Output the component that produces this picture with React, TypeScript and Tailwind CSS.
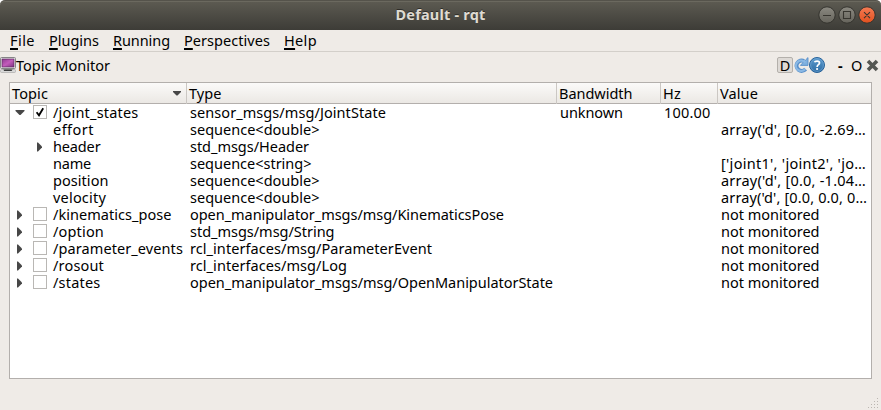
import { useLayoutEffect, useRef, type ReactNode } from "react";

/* Text run whose tracking is adjusted so that it occupies a given width. */
function Fit({ w, children, className = "" }: { w: number; children: ReactNode; className?: string }) {
  const ref = useRef<HTMLSpanElement>(null);
  useLayoutEffect(() => {
    const el = ref.current;
    if (!el) return;
    el.style.letterSpacing = "0px";
    const n = (el.textContent ?? "").length;
    el.style.letterSpacing = (w - el.getBoundingClientRect().width) / n + "px";
  }, [w]);
  return (
    <span ref={ref} className={`inline-block whitespace-pre ${className}`}>
      {children}
    </span>
  );
}

type Row = {
  topic: [string, number];
  type: [string, number];
  value?: [string, number];
  bandwidth?: [string, number];
  hz?: [string, number];
  child?: boolean;
  arrow?: "down" | "right";
  checked?: boolean;
};

const idle: [string, number] = ["not monitored", 98.5];

const rows: Row[] = [
  { topic: ["/joint_states", 85.5], type: ["sensor_msgs/msg/JointState", 196], bandwidth: ["unknown", 63], hz: ["100.00", 46.5], arrow: "down", checked: true },
  { topic: ["effort", 41], type: ["sequence<double>", 129.5], value: ["array('d', [0.0, -2.69…", 145], child: true },
  { topic: ["header", 47.5], type: ["std_msgs/Header", 119], child: true, arrow: "right" },
  { topic: ["name", 38], type: ["sequence<string>", 121.5], value: ["['joint1', 'joint2', 'jo…", 145], child: true },
  { topic: ["position", 55.5], type: ["sequence<double>", 129.5], value: ["array('d', [0.0, -1.04…", 145], child: true },
  { topic: ["velocity", 53], type: ["sequence<double>", 129.5], value: ["array('d', [0.0, 0.0, 0…", 146], child: true },
  { topic: ["/kinematics_pose", 118.5], type: ["open_manipulator_msgs/msg/KinematicsPose", 314], value: idle, arrow: "right" },
  { topic: ["/option", 51], type: ["std_msgs/msg/String", 144.5], value: idle, arrow: "right" },
  { topic: ["/parameter_events", 130], type: ["rcl_interfaces/msg/ParameterEvent", 242], value: idle, arrow: "right" },
  { topic: ["/rosout", 51], type: ["rcl_interfaces/msg/Log", 157], value: idle, arrow: "right" },
  { topic: ["/states", 47.5], type: ["open_manipulator_msgs/msg/OpenManipulatorState", 363], value: idle, arrow: "right" },
];

const grid = "grid grid-cols-[177px_370px_104px_57px_1fr]";

function Arrow({ dir }: { dir?: "down" | "right" }) {
  return (
    <svg width="10" height="17" viewBox="0 0 10 17" className="block shrink-0">
      {dir === "down" && <path d="M.5 5h9v1L5.5 10h-1L.5 6z" fill="#474747" />}
      {dir === "right" && <path d="M2 3.5h1L7 7.5v1L3 12.5H2z" fill="#474747" />}
    </svg>
  );
}

function Check({ checked }: { checked?: boolean }) {
  return (
    <svg width="14" height="14" viewBox="0 0 14 14" className="block shrink-0">
      <rect x=".5" y=".5" width="13" height="13" fill="#fff" stroke="#b9b7b4" />
      {checked && <path d="M3.6 7.2 6 10.3 10.2 3.2" fill="none" stroke="#000" strokeWidth="1.8" />}
    </svg>
  );
}

function TableRow({ r }: { r: Row }) {
  return (
    <div className={`${grid} h-[17px] leading-[15px]`}>
      <div className="flex">
        <div className={`flex w-[43px] shrink-0 ${r.child ? "pl-[25px]" : "pl-[5px]"}`}>
          <Arrow dir={r.arrow} />
          {!r.child && (
            <div className="ml-[8px]">
              <Check checked={r.checked} />
            </div>
          )}
        </div>
        <Fit w={r.topic[1]}>{r.topic[0]}</Fit>
      </div>
      <div className="pl-[3px]"><Fit w={r.type[1]}>{r.type[0]}</Fit></div>
      <div className="pl-[3px]">{r.bandwidth && <Fit w={r.bandwidth[1]}>{r.bandwidth[0]}</Fit>}</div>
      <div className="pl-[3px]">{r.hz && <Fit w={r.hz[1]}>{r.hz[0]}</Fit>}</div>
      <div className="pl-[3px]">{r.value && <Fit w={r.value[1]}>{r.value[0]}</Fit>}</div>
    </div>
  );
}

function MenuItem({ label, w }: { label: string; w: number }) {
  return (
    <Fit w={w}>
      <span className="underline decoration-2 underline-offset-2 [text-decoration-skip-ink:none]">{label[0]}</span>
      {label.slice(1)}
    </Fit>
  );
}

function WindowButtons() {
  return (
    <svg width="60" height="20" viewBox="0 0 60 20" className="block">
      <defs>
        <linearGradient id="grey" x1="0" y1="0" x2="0" y2="1">
          <stop offset="0" stopColor="#8b8981" />
          <stop offset="1" stopColor="#65635b" />
        </linearGradient>
        <linearGradient id="orange" x1="0" y1="0" x2="0" y2="1">
          <stop offset="0" stopColor="#f47b54" />
          <stop offset="1" stopColor="#e1501e" />
        </linearGradient>
      </defs>
      <g stroke="#34332e">
        <circle cx="10" cy="10" r="8.2" fill="url(#grey)" />
        <circle cx="30" cy="10" r="8.2" fill="url(#grey)" />
        <circle cx="50" cy="10" r="8.2" fill="url(#orange)" />
      </g>
      <path d="M6 10.5h8M26.5 6.5h7v7h-7zM47 7.2l6 6M53 7.2l-6 6" fill="none" stroke="#37352f" strokeWidth="1.1" />
    </svg>
  );
}

function MonitorIcon() {
  return (
    <svg width="16" height="16" viewBox="0 0 16 16" className="block shrink-0">
      <defs>
        <linearGradient id="screen" x1="0" y1="0" x2="1" y2="1">
          <stop offset="0" stopColor="#8e3b90" />
          <stop offset=".5" stopColor="#c35cbb" />
          <stop offset="1" stopColor="#7b3280" />
        </linearGradient>
      </defs>
      <rect x=".5" y=".5" width="15" height="11" rx="1" fill="#eee" stroke="#858585" />
      <rect x="2" y="2" width="12" height="8" fill="url(#screen)" stroke="#5c285f" strokeWidth=".7" />
      <path d="M5 12h6v1H5z" fill="#555" />
      <rect x=".5" y="12.5" width="15" height="3" rx="1" fill="#d8d8d8" stroke="#aaa" strokeWidth=".7" />
      <path d="M3.5 12.5h9l-.8 1.5H4z" fill="#3d3d3d" />
    </svg>
  );
}

function ReloadIcon() {
  return (
    <svg width="16" height="16" viewBox="0 0 16 16" className="block">
      <path d="M12.6 12.2A5.2 5.2 0 1 1 11 4" fill="none" stroke="#5a90ca" strokeWidth="4" />
      <path d="M15 .6v7.8H7.4L10 5.6 12.5 3z" fill="#7fb0df" stroke="#5a90ca" strokeWidth=".9" />
      <path d="M12.2 12A5.2 5.2 0 1 1 11 4.4L12.5 5.4" fill="none" stroke="#8ab8e4" strokeWidth="2.2" />
    </svg>
  );
}

function HelpIcon() {
  return (
    <svg width="16" height="16" viewBox="0 0 16 16" className="block">
      <defs>
        <linearGradient id="help" x1="0" y1="0" x2="0" y2="1">
          <stop offset="0" stopColor="#5c9bce" />
          <stop offset="1" stopColor="#2d6ca4" />
        </linearGradient>
      </defs>
      <circle cx="8" cy="8" r="7.5" fill="url(#help)" stroke="#28639a" />
      <circle cx="8" cy="8" r="6.4" fill="none" stroke="#78abd8" strokeWidth=".6" />
      <path d="M5.5 5.3C6 3.8 10.5 3.4 10.5 6c0 1.7-2.4 1.8-2.4 4" fill="none" stroke="#fff" strokeWidth="1.7" />
      <circle cx="8.1" cy="12" r="1.1" fill="#fff" />
    </svg>
  );
}

const heads: [string, number][] = [["Topic", 36], ["Type", 32.5], ["Bandwidth", 73.5], ["Hz", 18], ["Value", 38]];

export default function App() {
  return (
    <div className="flex h-[410px] w-[881px] flex-col overflow-hidden bg-white font-['Noto_Sans',sans-serif] text-[14.5px] text-black">
      <header className="grid h-[30px] shrink-0 grid-cols-[1fr_auto_1fr] rounded-t-[5px] border-t border-[#55534b] bg-linear-to-b from-[#5d5b52] to-[#3d3c37] shadow-[inset_0_1px_0_#6b695f]">
        <div />
        <div className="pt-[2px] text-[14.5px] leading-[22px] font-bold text-[#dfdbd2] [text-shadow:0_-1px_0_#2e2d29]">
          <Fit w={90}>Default - rqt</Fit>
        </div>
        <div className="flex justify-end pt-[4px] pr-[4px]">
          <WindowButtons />
        </div>
      </header>
      <nav className="flex h-[22px] shrink-0 gap-[14px] border-b border-[#d3cfca] bg-[#efebe7] pl-[10px] leading-[20px]">
        <MenuItem label="File" w={25} />
        <MenuItem label="Plugins" w={50} />
        <MenuItem label="Running" w={57} />
        <MenuItem label="Perspectives" w={86} />
        <MenuItem label="Help" w={33} />
      </nav>
      <main className="flex flex-1 flex-col bg-[#efebe7]">
        <div className="flex h-[30px] shrink-0 pt-[5px]">
          <MonitorIcon />
          <Fit w={94} className="h-[17px] leading-[16px]">Topic Monitor</Fit>
          <div className="ml-auto flex h-[17px] leading-[16px]">
            <span className="flex h-[16px] w-[16px] items-center justify-center rounded-[2px] border border-[#b4b0ab] bg-[#dedad6]">D</span>
            <ReloadIcon />
            <HelpIcon />
            <span className="ml-[13px] w-[7px] font-bold">-</span>
            <span className="ml-[6px] w-[15px]">O</span>
            <svg width="13" height="13" viewBox="0 0 13 13" className="mt-[2px] mr-[2px] block">
              <path d="m2 2 9 9M11 2l-9 9" stroke="#555753" strokeWidth="3.6" />
            </svg>
          </div>
        </div>
        <section className="ml-[9px] h-[297px] w-[863px] shrink-0 border border-[#b3afac] bg-white">
          <div className={`${grid} h-[21px] border-b border-[#b3afac] bg-linear-to-b from-[#fbfaf9] to-[#ebe8e4] leading-[21px]`}>
            {heads.map(([t, w], i) => (
              <div key={t} className={`flex pl-[2px] ${i < 4 ? "border-r border-[#cbc7c3]" : ""}`}>
                <Fit w={w}>{t}</Fit>
                {i === 0 && (
                  <svg width="8" height="5" viewBox="0 0 8 5" className="mt-[8px] mr-[5px] ml-auto block">
                    <path d="M0 0h8v1L4.5 4.5h-1L0 1z" fill="#474747" />
                  </svg>
                )}
              </div>
            ))}
          </div>
          <div className="pt-[1px]">
            {rows.map((r) => (
              <TableRow key={r.topic[0]} r={r} />
            ))}
          </div>
        </section>
        <footer className="mt-auto flex justify-end">
          <svg width="13" height="13" viewBox="0 0 13 13" className="block" fill="#bbb6b1">
            <path d="M9 1h1v1H9zM6 4h1v1H6zM9 4h1v1H9zM3 7h1v1H3zM6 7h1v1H6zM9 7h1v1H9zM0 10h1v1H0zM3 10h1v1H3zM6 10h1v1H6zM9 10h1v1H9z" />
          </svg>
        </footer>
      </main>
    </div>
  );
}
